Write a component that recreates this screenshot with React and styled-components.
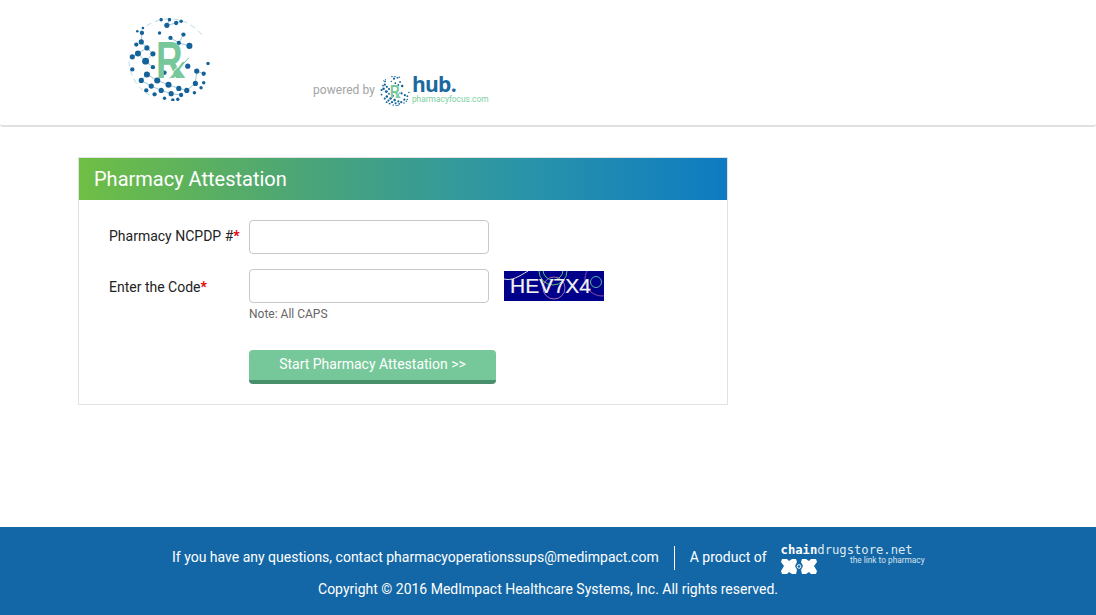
import styled, { createGlobalStyle } from "styled-components";

const GlobalStyle = createGlobalStyle`
  * {
    box-sizing: border-box;
  }
  html, body {
    margin: 0;
    padding: 0;
    background: #fff;
    font-family: Roboto, "Liberation Sans", sans-serif;
  }
`;

const Page = styled.div`
  width: 1096px;
  height: 615px;
  display: flex;
  flex-direction: column;
  overflow: hidden;
`;

const Header = styled.header`
  height: 127px;
  flex: none;
  display: flex;
  align-items: flex-start;
  padding: 18px 0 0 128px;
  border-bottom: 2px solid #e0e0e0;
  border-radius: 0 0 3px 3px;
`;

const Powered = styled.div`
  display: flex;
  align-items: center;
  margin: 58px 0 0 102px;
`;

const PoweredText = styled.span`
  font-size: 12px;
  letter-spacing: 0.05px;
  color: #a3a3a3;
  margin: -2px 5px 0 0;
`;

const Hub = styled.div`
  display: flex;
  flex-direction: column;
  margin-left: 2px;
`;

const HubName = styled.span`
  font-family: "Open Sans", sans-serif;
  font-size: 21px;
  line-height: 19px;
  font-weight: 700;
  color: #1c699f;
  letter-spacing: -0.7px;
  margin-top: -4px;
`;

const HubSite = styled.span`
  font-size: 8.4px;
  line-height: 9px;
  color: #7bcfa0;
  margin-top: 1px;
`;

const Main = styled.main`
  flex: 1;
  padding: 30px 0 0 78px;
`;

const Card = styled.section`
  width: 650px;
  height: 248px;
  border: 1px solid #e2e2e2;
`;

const CardTitle = styled.h1`
  margin: 0;
  height: 42px;
  padding-left: 15px;
  font-size: 20px;
  line-height: 43px;
  font-weight: 400;
  color: #fff;
  background: linear-gradient(90deg, #6fbe44 0%, #4ba578 35%, #2a94a8 68%, #0e7bc3 100%);
`;

const Form = styled.form`
  display: grid;
  grid-template-columns: 140px 240px auto;
  grid-template-rows: 34px 34px auto auto;
  row-gap: 15px;
  padding: 20px 0 0 30px;
`;

const Label = styled.label`
  font-size: 14px;
  line-height: ${(p) => p.$line || "32px"};
  color: #222;
`;

const Req = styled.span`
  color: #e60000;
  font-weight: 700;
`;

const Input = styled.input`
  width: 240px;
  height: 34px;
  border: 1px solid #c8c8c8;
  border-radius: 4px;
  background: #fff;
`;

const Captcha = styled.svg`
  display: block;
  margin: 2px 0 0 15px;
`;

const Note = styled.div`
  grid-column: 2;
  margin-top: -14px;
  font-size: 12px;
  line-height: 20px;
  color: #666;
`;

const Submit = styled.button`
  grid-column: 2 / 4;
  width: 247px;
  height: 34px;
  margin-top: 11px;
  padding: 0 0 2px;
  border: none;
  border-bottom: 4px solid #4a8f6b;
  border-radius: 4px;
  background: #76c799;
  font-family: inherit;
  font-size: 14px;
  color: #fff;
`;

const Footer = styled.footer`
  height: 88px;
  flex: none;
  background: #1467a6;
  color: #fff;
  font-size: 14px;
  text-align: center;
`;

const ContactRow = styled.div`
  height: 46px;
  padding: 14px 0 0 172px;
  display: flex;
  align-items: flex-start;
`;

const Contact = styled.span`
  line-height: 32px;
`;

const Divider = styled.span`
  width: 1px;
  height: 24px;
  margin: 5px 15px 0;
  background: #fff;
`;

const Chain = styled.div`
  width: 144px;
  margin: 2px 0 0 14px;
  position: relative;
  text-align: left;
`;

const ChainName = styled.div`
  font-family: "DejaVu Sans Mono", monospace;
  font-size: 12.2px;
  line-height: 14px;
  color: #dfe9f2;
  b {
    font-weight: 700;
    color: #fff;
  }
`;

const ChainTag = styled.div`
  position: absolute;
  right: 0;
  top: 12px;
  font-size: 8.3px;
  line-height: 10px;
  color: #d5e3ef;
`;

const Copyright = styled.div`
  line-height: 32px;
`;

const dots = [
  [172, 62, 6], [200, 55, 5], [155, 45, 4], [180, 45, 4], [215, 50, 4], [100, 70, 3], [83, 80, 3],
  [97, 85, 5], [222, 90, 5], [183, 100, 5], [208, 115, 5], [240, 124, 7], [95, 112, 6], [80, 120, 5],
  [112, 130, 6], [85, 147, 7], [68, 157, 6], [130, 148, 6], [108, 170, 8], [130, 188, 5], [68, 195, 5],
  [112, 210, 7], [143, 228, 7], [95, 228, 6], [165, 205, 5], [177, 241, 7], [208, 252, 6], [125, 245, 6],
  [262, 200, 6], [283, 208, 5], [296, 177, 4], [283, 235, 4], [258, 237, 6], [232, 258, 6], [155, 258, 6],
  [185, 268, 6], [215, 272, 5], [135, 270, 5], [110, 258, 5], [165, 282, 4], [255, 265, 4], [275, 250, 4],
  [205, 285, 4], [190, 287, 4], [235, 185, 6], [150, 85, 4],
];

const links = [
  [0, 1], [0, 3], [1, 4], [7, 12], [12, 14], [14, 15], [15, 16], [15, 18], [17, 18], [18, 19], [14, 17],
  [21, 22], [22, 25], [25, 26], [23, 27], [27, 34], [34, 35], [35, 36], [32, 33], [28, 32], [28, 29],
  [9, 10], [10, 11], [8, 10], [21, 23], [26, 33],
];

const Globe = ({ size, dotScale, showLines }) => (
  <svg width={size} height={size} viewBox="55 40 250 250">
    <path d="M90 82 A122 122 0 0 1 280 95" fill="none" stroke="#8fc8d8" strokeWidth="2" strokeDasharray="16 12" />
    <path d="M58 170 A122 122 0 0 0 120 272" fill="none" stroke="#8fc8d8" strokeWidth="2" strokeDasharray="16 12" />
    {showLines &&
      links.map(([a, b]) => (
        <line
          key={`${a}-${b}`}
          x1={dots[a][0]}
          y1={dots[a][1]}
          x2={dots[b][0]}
          y2={dots[b][1]}
          stroke="#6ea6c4"
          strokeWidth="2"
        />
      ))}
    {dots.map(([x, y, r]) => (
      <circle key={`${x}-${y}`} cx={x} cy={y} r={r * dotScale} fill="#14629a" />
    ))}
    <text
      x="139"
      y="220"
      fontFamily="Liberation Sans"
      fontWeight="700"
      fontSize="154"
      fill="#76c799"
      textLength="80"
      lengthAdjust="spacingAndGlyphs"
    >
      R
    </text>
    <text x="183" y="222" fontFamily="Liberation Sans" fontSize="90" fill="#76c799">
      x
    </text>
    <line x1="172" y1="222" x2="230" y2="160" stroke="#fff" strokeWidth="3" />
    <line x1="180" y1="222" x2="238" y2="160" stroke="#76c799" strokeWidth="3" />
  </svg>
);

const CaptchaImage = () => (
  <Captcha width="100" height="30" viewBox="0 0 100 30">
    <rect width="100" height="30" fill="#00008a" />
    <path d="M0 8 C8 10 14 6 24 0" fill="none" stroke="#ddd" strokeWidth="1" />
    <circle cx="49" cy="0" r="14" fill="none" stroke="#52c86a" strokeWidth="1" />
    <circle cx="49" cy="-1" r="10" fill="none" stroke="#52c86a" strokeWidth="1" />
    <circle cx="50" cy="17" r="11" fill="none" stroke="#a56fb0" strokeWidth="1" />
    <circle cx="92" cy="11" r="5.5" fill="none" stroke="#4fb89a" strokeWidth="1" />
    <circle cx="98" cy="8" r="17" fill="none" stroke="#8a4fa0" strokeWidth="1" />
    <text x="6" y="22" fontFamily="Liberation Sans" fontSize="21" fill="#f2f2f2" stroke="#f2f2f2" strokeWidth="0.2" textLength="81">
      HEV7X4
    </text>
  </Captcha>
);

const ChainMark = () => (
  <svg width="36" height="17" viewBox="0 0 36 17" style={{ display: "block", marginTop: 1 }}>
    <path
      d="M1 1h5l2 2 3-2h4l1 3-2 4 2 4-1 4h-4l-3-2-2 2H1l-1-3 3-5-3-4zM21 1h4l3 2 2-2h5l1 3-3 4 3 5-1 3h-5l-2-2-3 2h-4l-1-4 2-4-2-4z"
      fill="#fff"
    />
    <circle cx="18" cy="8.5" r="1.8" fill="none" stroke="#fff" strokeWidth="1" />
  </svg>
);

export default function App() {
  return (
    <Page>
      <GlobalStyle />
      <Header>
        <Globe size={83} dotScale={1.3} showLines />
        <Powered>
          <PoweredText>powered by</PoweredText>
          <Globe size={30} dotScale={1.5} />
          <Hub>
            <HubName>hub.</HubName>
            <HubSite>pharmacyfocus.com</HubSite>
          </Hub>
        </Powered>
      </Header>
      <Main>
        <Card>
          <CardTitle>Pharmacy Attestation</CardTitle>
          <Form>
            <Label>
              Pharmacy NCPDP #<Req>*</Req>
            </Label>
            <Input type="text" />
            <span />
            <Label $line="36px">
              Enter the Code<Req>*</Req>
            </Label>
            <Input type="text" />
            <CaptchaImage />
            <Note>Note: All CAPS</Note>
            <Submit type="button">Start Pharmacy Attestation &gt;&gt;</Submit>
          </Form>
        </Card>
      </Main>
      <Footer>
        <ContactRow>
          <Contact>If you have any questions, contact pharmacyoperationssups@medimpact.com</Contact>
          <Divider />
          <Contact>A product of</Contact>
          <Chain>
            <ChainName>
              <b>chain</b>drugstore.net
            </ChainName>
            <ChainTag>the link to pharmacy</ChainTag>
            <ChainMark />
          </Chain>
        </ContactRow>
        <Copyright>Copyright © 2016 MedImpact Healthcare Systems, Inc. All rights reserved.</Copyright>
      </Footer>
    </Page>
  );
}
